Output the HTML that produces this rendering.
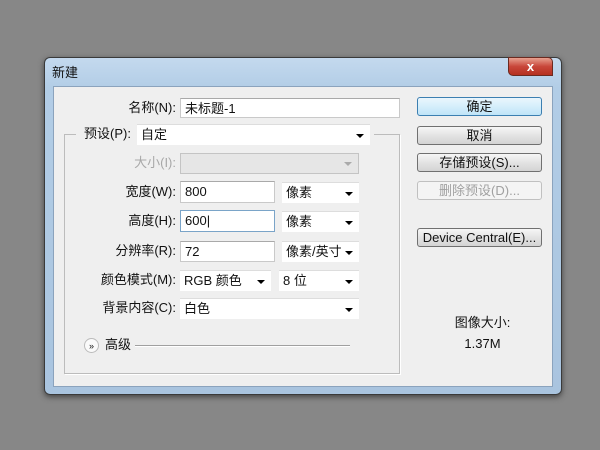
<!DOCTYPE html><html><head><style>
body{margin:0;width:600px;height:450px;background:#878787;position:relative;overflow:hidden;font-family:"Liberation Sans","Noto Sans CJK SC",sans-serif;font-size:13px;color:#111}
.a{position:absolute}
.win{left:44px;top:57px;width:516px;height:336px;border-radius:6px;background:linear-gradient(#c4d9ee,#b2cde6 30px,#a9c4df);border:1px solid #3a3a3a;box-shadow:0 2px 6px #444}
.in{left:53px;top:86px;width:498px;height:299px;background:#efefef;border:1px solid #8ba3bd}
.inp{background:#fff;border:1px solid #c9c9c9;border-top-color:#a9a9a9;height:20px;line-height:19px;padding-left:4px;box-sizing:border-box}
.sel{background:#fff;height:21px;line-height:20px;padding-left:4px;box-sizing:border-box;border-top:1px solid #ddd}
.sel:after{content:"";position:absolute;right:6px;top:9px;border:4px solid transparent;border-top:4px solid #000;border-bottom:0}
.lb{text-align:right;width:120px;left:56px;line-height:20px}
.btn{left:417px;width:125px;height:19px;border:1px solid #707070;border-radius:3px;background:linear-gradient(#f6f6f6,#e3e3e3 50%,#d3d3d3);text-align:center;line-height:17px;box-sizing:border-box}
</style></head><body>
<div class="a win"></div>
<div class="a" style="left:52px;top:62px;font-size:13px">新建</div>
<div class="a" style="left:508px;top:57px;width:45px;height:19px;border-radius:0 5px 0 5px;background:linear-gradient(#e8a08f,#c8463a 50%,#b5301f);border:1px solid #6b2a20;color:#fff;text-align:center;font-weight:bold;line-height:18px;box-sizing:border-box">x</div>
<div class="a in"></div>
<div class="a" style="left:64px;top:134px;width:334px;height:238px;border:1px solid #bcbcbc;box-shadow:1px 1px 0 #fff"></div>
<div class="a lb" style="top:98px">名称(N):</div>
<div class="a inp" style="left:180px;top:98px;width:220px">未标题-1</div>
<div class="a" style="left:76px;top:124px;width:298px;height:22px;background:#efefef"></div>
<div class="a" style="left:84px;top:124px;line-height:20px">预设(P):</div>
<div class="a sel" style="left:137px;top:124px;width:233px">自定</div>
<div class="a lb" style="top:153px;color:#a8a8a8">大小(I):</div>
<div class="a" style="left:180px;top:153px;width:179px;height:21px;background:#e6e6e6;border:1px solid #c4c4c4;box-sizing:border-box"><div class="a" style="right:6px;top:8px;border:4px solid transparent;border-top:4px solid #aaa;border-bottom:0"></div></div>
<div class="a lb" style="top:182px">宽度(W):</div>
<div class="a inp" style="left:180px;top:181px;width:95px;height:22px;line-height:20px">800</div>
<div class="a sel" style="left:282px;top:182px;width:77px">像素</div>
<div class="a lb" style="top:211px">高度(H):</div>
<div class="a inp" style="left:180px;top:210px;width:95px;height:22px;line-height:20px;border-color:#7aa4c8">600|</div>
<div class="a sel" style="left:282px;top:211px;width:77px">像素</div>
<div class="a lb" style="top:241px">分辨率(R):</div>
<div class="a inp" style="left:180px;top:241px;width:95px;height:21px">72</div>
<div class="a sel" style="left:282px;top:241px;width:77px">像素/英寸</div>
<div class="a lb" style="top:270px">颜色模式(M):</div>
<div class="a sel" style="left:180px;top:270px;width:91px">RGB 颜色</div>
<div class="a sel" style="left:279px;top:270px;width:80px">8 位</div>
<div class="a lb" style="top:298px">背景内容(C):</div>
<div class="a sel" style="left:180px;top:298px;width:179px">白色</div>
<div class="a" style="left:84px;top:338px;width:15px;height:15px;border-radius:50%;background:#fafafa;border:1px solid #bbb;font-size:9px;text-align:center;line-height:14px;box-sizing:border-box">»</div>
<div class="a" style="left:105px;top:335px;line-height:20px">高级</div>
<div class="a" style="left:135px;top:345px;width:215px;height:1px;background:#a0a0a0;border-bottom:1px solid #fff"></div>
<div class="a btn" style="top:97px;border-color:#3c7fb1;background:linear-gradient(#eaf6fd,#d5eefb 50%,#bfe4f8)">确定</div>
<div class="a btn" style="top:126px">取消</div>
<div class="a btn" style="top:153px">存储预设(S)...</div>
<div class="a btn" style="top:181px;color:#a0a0a0;background:#f4f4f4;border-color:#c0c0c0">删除预设(D)...</div>
<div class="a btn" style="top:228px">Device Central(E)...</div>
<div class="a" style="left:420px;top:312px;width:125px;text-align:center">图像大小:</div>
<div class="a" style="left:420px;top:336px;width:125px;text-align:center">1.37M</div>
</body></html>
